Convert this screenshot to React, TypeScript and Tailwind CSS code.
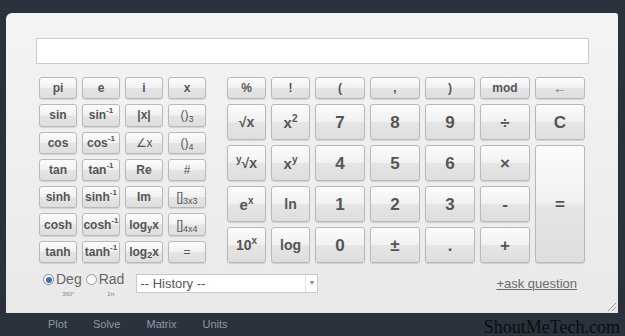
import React from "react";

const btn =
  "flex items-center justify-center rounded-[3px] border border-[#b9b9b9] bg-[linear-gradient(to_bottom,#fcfcfc_0%,#f1f1f1_48%,#e5e5e5_52%,#dedede_100%)] shadow-[0_1px_1px_rgba(0,0,0,0.12)] text-[#555] font-bold leading-none";

const Sup = ({ children }: { children: React.ReactNode }) => (
  <sup className="text-[8px] relative -top-[4px] align-baseline font-bold">{children}</sup>
);
const Sub = ({ children }: { children: React.ReactNode }) => (
  <sub className="text-[9px] relative top-[3px] align-baseline font-normal">{children}</sub>
);
const SubB = ({ children }: { children: React.ReactNode }) => (
  <sub className="text-[9px] relative top-[3px] align-baseline font-bold">{children}</sub>
);

const leftKeys: React.ReactNode[] = [
  "pi", "e", "i", "x",
  "sin", <>sin<Sup>-1</Sup></>, "|x|", <span className="font-normal">()<Sub>3</Sub></span>,
  "cos", <>cos<Sup>-1</Sup></>, <span className="font-normal">∠x</span>, <span className="font-normal">()<Sub>4</Sub></span>,
  "tan", <>tan<Sup>-1</Sup></>, "Re", <span className="font-normal">#</span>,
  "sinh", <>sinh<Sup>-1</Sup></>, "Im", <span className="font-normal">[]<Sub>3x3</Sub></span>,
  "cosh", <>cosh<Sup>-1</Sup></>, <>log<SubB>y</SubB>x</>, <span className="font-normal">[]<Sub>4x4</Sub></span>,
  "tanh", <>tanh<Sup>-1</Sup></>, <>log<SubB>2</SubB>x</>, <span className="font-normal">=</span>,
];

const topKeys: React.ReactNode[] = ["%", "!", "(", ",", ")", "mod", "←"];

const bigRows: React.ReactNode[][] = [
  [<span className="text-[14px]">√x</span>, <span className="text-[15px]">x<sup className="text-[10px] relative -top-[6px] align-baseline">2</sup></span>, "7", "8", "9", "÷", "C"],
  [<span className="text-[14px]"><sup className="text-[10px] relative -top-[5px] align-baseline">y</sup>√x</span>, <span className="text-[15px]">x<sup className="text-[10px] relative -top-[6px] align-baseline">y</sup></span>, "4", "5", "6", "×"],
  [<span className="text-[15px]">e<sup className="text-[10px] relative -top-[6px] align-baseline">x</sup></span>, <span className="text-[14px]">ln</span>, "1", "2", "3", "-"],
  [<span className="text-[14px]">10<sup className="text-[10px] relative -top-[6px] align-baseline">x</sup></span>, <span className="text-[14px]">log</span>, "0", "±", ".", "+"],
];

export default function App() {
  return (
    <div
      className="w-[625px] h-[336px] bg-[#29323d] overflow-hidden flex flex-col"
      style={{ fontFamily: '"Liberation Sans", Arial, sans-serif' }}
    >
      <div className="pt-[13px] pl-[6px]">
        <div className="relative w-[612px] h-[300px] rounded-tl-[6px] rounded-tr-[3px] bg-[linear-gradient(to_bottom,#f4f4f4,#e9e9e9)] pt-[25px]">
          <div className="ml-[30px] w-[553px] h-[26px] bg-white border border-[#cdcdcd]" />

          <div className="flex ml-[33px] mt-[13px] gap-[21px]">
            <div className="grid grid-cols-[repeat(4,38px)] grid-rows-[repeat(7,1fr)] h-[186px] gap-x-[5px] gap-y-[5px]">
              {leftKeys.map((k, i) => (
                <div key={i} className={`${btn} text-[12px]`}>
                  {k}
                </div>
              ))}
            </div>

            <div className="grid grid-cols-[39px_39px_50px_50px_50px_50px_50px] grid-rows-[22px_36px_36px_36px_36px] gap-[5px]">
              {topKeys.map((k, i) => (
                <div key={"t" + i} className={`${btn} text-[12px]`}>
                  {k === "←" ? <span className="font-normal text-[14px] text-[#777]">←</span> : k}
                </div>
              ))}
              {bigRows.map((row, r) =>
                row.map((k, c) => (
                  <div key={r + "-" + c} className={`${btn} text-[17px]`}>
                    {k}
                  </div>
                ))
              )}
              <div className={`${btn} text-[17px] col-start-7 row-start-3 row-span-3`}>=</div>
            </div>
          </div>

          <div className="flex items-center ml-[37px] mt-[6px] w-[534px]">
            <div className="flex items-start">
              <div className="flex flex-col items-center">
                <div className="flex items-center">
                  <span className="w-[11px] h-[11px] rounded-full border border-[#7a8a9a] bg-white flex items-center justify-center mr-[2px]">
                    <span className="w-[6px] h-[6px] rounded-full bg-[#3d6ea8]" />
                  </span>
                  <span className="text-[14px] text-[#666]">Deg</span>
                </div>
                <span className="text-[6px] text-[#888] leading-none ml-[12px] mt-[1px]">360°</span>
              </div>
              <div className="flex flex-col items-center ml-[4px]">
                <div className="flex items-center">
                  <span className="w-[11px] h-[11px] rounded-full border border-[#9a9a9a] bg-[linear-gradient(#f0f0f0,#ffffff)] mr-[2px]" />
                  <span className="text-[14px] text-[#666]">Rad</span>
                </div>
                <span className="text-[6px] text-[#888] leading-none ml-[12px] mt-[1px]">2π</span>
              </div>
            </div>
            <div className="ml-[12px] w-[182px] h-[19px] bg-white border border-[#c8c8c8] flex items-center">
              <span className="flex-1 pl-[3px] text-[13px] text-[#555] leading-none">-- History --</span>
              <span className="w-[12px] h-full border-l border-[#e0e0e0] flex items-center justify-center text-[7px] text-[#888]">▼</span>
            </div>
            <span className="ml-auto mt-[2px] text-[13px] text-[#6a6a6a] underline">+ask question</span>
          </div>

          <div className="absolute right-[2px] bottom-[2px] w-[8px] h-[8px] bg-[linear-gradient(135deg,transparent_45%,#999_45%,#999_55%,transparent_55%,transparent_70%,#999_70%,#999_80%,transparent_80%)]" />
        </div>
      </div>

      <div className="flex items-center h-[23px] pl-[48px] gap-[26px] text-[11px] text-[#8e98a3]">
        <span>Plot</span>
        <span>Solve</span>
        <span>Matrix</span>
        <span>Units</span>
        <span
          className="ml-auto mr-[5px] text-[18px] text-[#0d0d0d] leading-none mt-[4px]"
          style={{ fontFamily: '"Liberation Serif", "Times New Roman", serif' }}
        >
          ShoutMeTech.com
        </span>
      </div>
    </div>
  );
}
